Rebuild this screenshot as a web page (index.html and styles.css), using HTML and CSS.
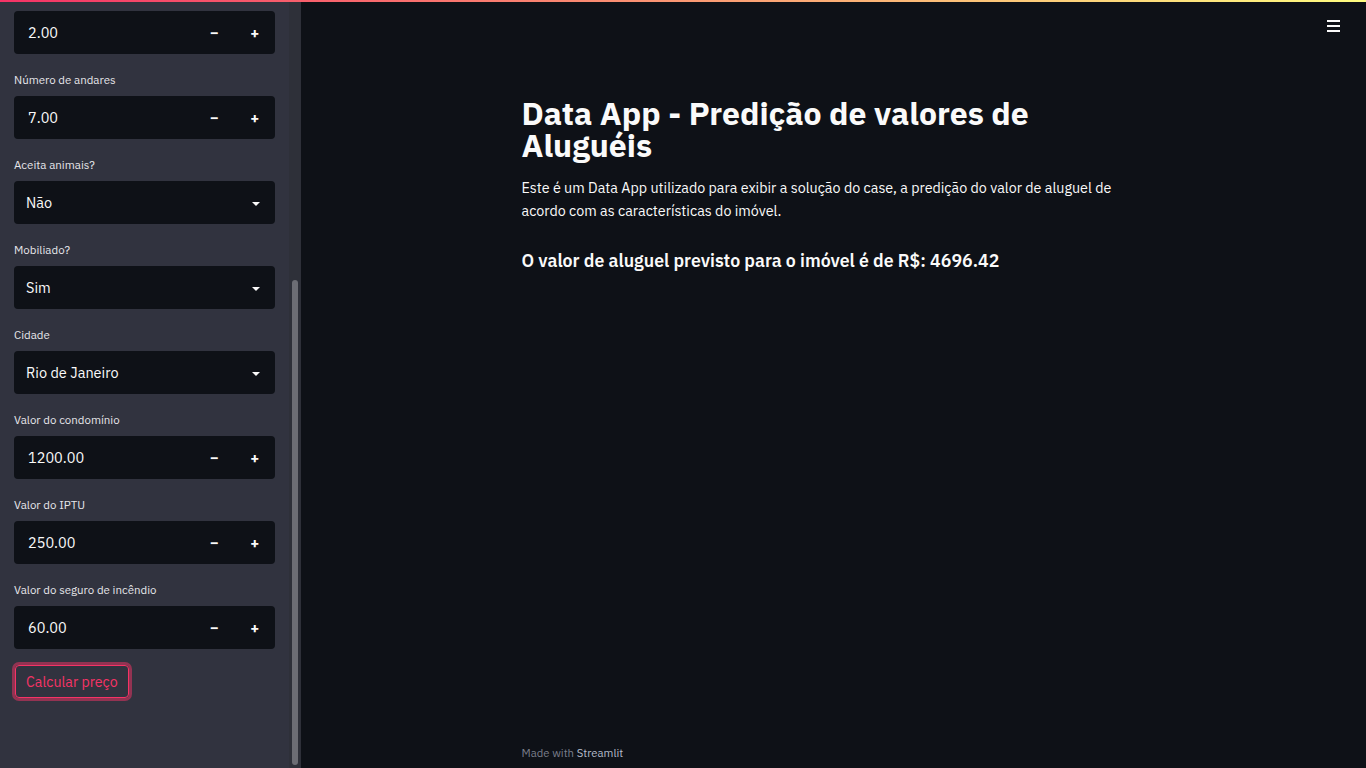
FILE: index.html
```html
<!DOCTYPE html>
<html lang="pt">
<head>
<meta charset="utf-8">
<title>Data App</title>
<link rel="stylesheet" href="styles.css">
</head>
<body>
<div class="decoration"></div>
<div class="app">
  <aside class="sidebar">
    <div class="sidebar-content">
      <div class="widget">
        <div class="number-input">
          <div class="num-value">2.00</div>
          <div class="steppers"><span class="step">&minus;</span><span class="step">+</span></div>
        </div>
      </div>
      <div class="widget">
        <label class="label">Número de andares</label>
        <div class="number-input">
          <div class="num-value">7.00</div>
          <div class="steppers"><span class="step">&minus;</span><span class="step">+</span></div>
        </div>
      </div>
      <div class="widget">
        <label class="label">Aceita animais?</label>
        <div class="select"><span class="sel-value">Não</span><span class="caret"></span></div>
      </div>
      <div class="widget">
        <label class="label">Mobiliado?</label>
        <div class="select"><span class="sel-value">Sim</span><span class="caret"></span></div>
      </div>
      <div class="widget">
        <label class="label">Cidade</label>
        <div class="select"><span class="sel-value">Rio de Janeiro</span><span class="caret"></span></div>
      </div>
      <div class="widget">
        <label class="label">Valor do condomínio</label>
        <div class="number-input">
          <div class="num-value">1200.00</div>
          <div class="steppers"><span class="step">&minus;</span><span class="step">+</span></div>
        </div>
      </div>
      <div class="widget">
        <label class="label">Valor do IPTU</label>
        <div class="number-input">
          <div class="num-value">250.00</div>
          <div class="steppers"><span class="step">&minus;</span><span class="step">+</span></div>
        </div>
      </div>
      <div class="widget">
        <label class="label">Valor do seguro de incêndio</label>
        <div class="number-input">
          <div class="num-value">60.00</div>
          <div class="steppers"><span class="step">&minus;</span><span class="step">+</span></div>
        </div>
      </div>
      <div class="widget button-widget">
        <button class="btn">Calcular preço</button>
      </div>
    </div>
    <div class="scrollbar"><div class="thumb"></div></div>
  </aside>
  <main class="main">
    <div class="topbar">
      <svg class="menu" width="14" height="12" viewBox="0 0 14 12"><rect x="0" y="0" width="13" height="2" fill="#fafafa"/><rect x="0" y="5" width="13" height="2" fill="#fafafa"/><rect x="0" y="10" width="13" height="2" fill="#fafafa"/></svg>
    </div>
    <div class="block">
      <h1 class="title">Data App - Predição de valores de Aluguéis</h1>
      <p class="desc">Este é um Data App utilizado para exibir a solução do case, a predição do valor de aluguel de acordo com as características do imóvel.</p>
      <h3 class="result">O valor de aluguel previsto para o imóvel é de R$: 4696.42</h3>
    </div>
    <footer class="footer">Made with <span class="brand">Streamlit</span></footer>
  </main>
</div>
</body>
</html>
```

FILE: styles.css
```css
* { box-sizing: border-box; }
html, body { margin: 0; padding: 0; height: 100%; }
body {
  background: #0e1117;
  color: #fafafa;
  font-family: "IBM Plex Sans", Roboto, "Noto Sans", sans-serif;
  overflow: hidden;
}
.decoration {
  position: fixed;
  top: 0; left: 0; right: 0;
  height: 2px;
  background: linear-gradient(90deg, #f63366, #fffd80);
  z-index: 10;
}
.app { display: flex; height: 768px; }
.sidebar {
  width: 301px;
  flex: 0 0 301px;
  background: #31333f;
  display: flex;
  overflow: hidden;
}
.sidebar-content {
  width: 289px;
  padding: 11px 14px 0 14px;
  display: flex;
  flex-direction: column;
  gap: 16px;
}
.widget { display: flex; flex-direction: column; }
.label {
  font-size: 11.5px;
  line-height: 18px;
  margin-bottom: 8px;
  color: #e6e6ea;
  position: relative;
  top: 1px;
}
.number-input { display: flex; height: 43px; }
.num-value {
  flex: 1;
  background: #0e1117;
  border-radius: 4px 0 0 4px;
  padding-left: 14px;
  font-size: 14.5px;
  display: flex;
  align-items: center;
}
.steppers {
  display: flex;
  background: #0e1117;
  border-radius: 0 4px 4px 0;
  width: 81px;
}
.step {
  flex: 1;
  display: flex;
  align-items: center;
  justify-content: center;
  font-size: 15px;
  font-weight: 700;
}
.select {
  height: 43px;
  background: #0e1117;
  border-radius: 4px;
  display: flex;
  align-items: center;
  justify-content: space-between;
  padding: 0 15px 0 12px;
  font-size: 14.5px;
}
.caret {
  width: 0; height: 0;
  border-left: 4px solid transparent;
  border-right: 4px solid transparent;
  border-top: 4px solid #fafafa;
  margin-top: 2px;
}
.button-widget { margin-top: -2px; align-items: flex-start; }
.btn {
  font-family: inherit;
  font-size: 14.2px;
  color: #f63366;
  background: transparent;
  border: 1px solid #f63366;
  border-radius: 4px;
  box-shadow: 0 0 0 3px rgba(246, 51, 102, 0.5);
  height: 33px;
  padding: 0 10px;
  margin-left: 1px;
  margin-top: 2px;
}
.scrollbar {
  width: 12px;
  background: #2e3039;
  padding-left: 3px;
  padding-top: 280px;
}
.thumb {
  width: 6px;
  height: 485px;
  background: #6c6d74;
  border-radius: 3px;
}
.main {
  flex: 1;
  position: relative;
  display: flex;
  flex-direction: column;
  align-items: center;
}
.topbar {
  align-self: stretch;
  height: 52px;
  display: flex;
  justify-content: flex-end;
  padding: 20px 25px 0 0;
}
.menu { display: block; }
.block {
  width: 624px;
  padding-top: 45px;
  flex: 1;
}
.title {
  margin: 0;
  font-size: 32px;
  line-height: 32px;
  font-weight: 700;
}
.desc {
  margin: 14.5px 0 0;
  font-size: 14.3px;
  line-height: 23px;
  color: #fafafa;
}
.result {
  margin: 26.5px 0 0;
  font-size: 17.75px;
  line-height: 26px;
  font-weight: 600;
}
.footer {
  width: 624px;
  font-size: 11.3px;
  color: #7b7f8c;
  height: 32px;
  padding-top: 9px;
}
.brand { color: #b4bccb; }
```
